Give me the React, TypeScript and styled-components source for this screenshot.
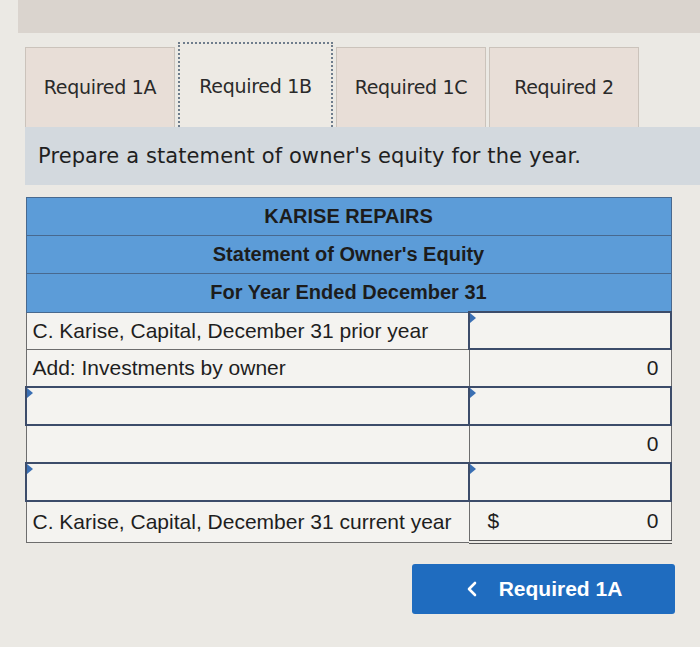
import React from 'react';
import styled, { createGlobalStyle } from 'styled-components';

const GlobalStyle = createGlobalStyle`
  html, body {
    margin: 0;
    padding: 0;
    background: #ebe9e4;
  }
  body {
    font-family: "Liberation Sans", Arial, sans-serif;
    color: #1e1e1e;
  }
`;

interface Row {
  label?: string;
  value?: string;
  prefix?: string;
  labelInput?: boolean;
  valueInput?: boolean;
  total?: boolean;
}

const rows: Row[] = [
  { label: 'C. Karise, Capital, December 31 prior year', valueInput: true },
  { label: 'Add: Investments by owner', value: '0' },
  { labelInput: true, valueInput: true },
  { value: '0' },
  { labelInput: true, valueInput: true },
  { label: 'C. Karise, Capital, December 31 current year', prefix: '$', value: '0', total: true },
];

const tabs = ['Required 1A', 'Required 1B', 'Required 1C', 'Required 2'];

const App: React.FC = () => {
  return (
    <>
      <GlobalStyle />
      <Page>
        <TopBand />
        <Content>
          <TabBar>
            {tabs.map((t, i) => (
              <Tab key={t} $active={i === 1} $wide={i === 1}>
                {t}
              </Tab>
            ))}
          </TabBar>
          <Instruction>Prepare a statement of owner's equity for the year.</Instruction>
          <Sheet>
            <colgroup>
              <col style={{ width: 443 }} />
              <col style={{ width: 202 }} />
            </colgroup>
            <tbody>
              <tr>
                <HeadCell colSpan={2}>KARISE REPAIRS</HeadCell>
              </tr>
              <tr>
                <HeadCell colSpan={2}>Statement of Owner's Equity</HeadCell>
              </tr>
              <tr>
                <HeadCell colSpan={2}>For Year Ended December 31</HeadCell>
              </tr>
              {rows.map((r, i) => (
                <tr key={i}>
                  <LabelCell $input={r.labelInput} $total={r.total}>
                    {r.labelInput && <Marker />}
                    {r.label}
                  </LabelCell>
                  <ValueCell $input={r.valueInput} $total={r.total}>
                    {r.valueInput && <Marker />}
                    <ValueInner>
                      <span>{r.prefix}</span>
                      <span>{r.value}</span>
                    </ValueInner>
                  </ValueCell>
                </tr>
              ))}
            </tbody>
          </Sheet>
          <Footer>
            <NavButton>
              <svg width="14" height="18" viewBox="0 0 14 18">
                <path d="M10 3 L4 9 L10 15" fill="none" stroke="#fff" strokeWidth="2.6" strokeLinecap="round" strokeLinejoin="round" />
              </svg>
              Required 1A
            </NavButton>
          </Footer>
        </Content>
      </Page>
    </>
  );
};

const Page = styled.div`
  width: 700px;
  min-height: 647px;
  overflow: hidden;
`;

const TopBand = styled.div`
  height: 33px;
  margin-left: 18px;
  background: #dad4ce;
`;

const Content = styled.div`
  padding-left: 25px;
`;

const TabBar = styled.div`
  display: flex;
  align-items: flex-end;
  gap: 3px;
  height: 94px;
`;

const Tab = styled.div<{ $active?: boolean; $wide?: boolean }>`
  box-sizing: border-box;
  width: ${p => (p.$wide ? 155 : 150)}px;
  height: ${p => (p.$active ? 85 : 80)}px;
  display: flex;
  align-items: center;
  justify-content: center;
  font-family: "DejaVu Sans", Verdana, sans-serif;
  font-size: 19px;
  letter-spacing: -0.3px;
  color: #2a2a2a;
  background: ${p => (p.$active ? '#edeae4' : '#e8ded7')};
  border: ${p => (p.$active ? '2px dotted #6f7d8c' : '1px solid #cbc3bb')};
  border-bottom: none;
  padding-bottom: ${p => (p.$active ? 0 : 2)}px;
  white-space: nowrap;
`;

const Instruction = styled.div`
  height: 58px;
  display: flex;
  align-items: center;
  padding-left: 13px;
  background: #d3d9de;
  font-family: "DejaVu Sans", Verdana, sans-serif;
  font-size: 21px;
  letter-spacing: 0.1px;
  color: #1f1f1f;
`;

const Sheet = styled.table`
  margin-top: 12px;
  width: 645px;
  border-collapse: collapse;
  table-layout: fixed;
  font-size: 21px;
`;

const HeadCell = styled.td`
  height: 37px;
  padding: 0;
  background: #5c9cd8;
  border: 1px solid #48698f;
  text-align: center;
  color: #1c1c1c;
  font-size: 20px;
  font-weight: bold;
`;

const Marker = styled.span`
  position: absolute;
  top: 0;
  left: 0;
  width: 0;
  height: 0;
  border-top: 5px solid transparent;
  border-bottom: 5px solid transparent;
  border-left: 6px solid #3a6fb3;
`;

const LabelCell = styled.td<{ $input?: boolean; $total?: boolean }>`
  position: relative;
  height: ${p => (p.$total ? 40 : 36)}px;
  padding: 0 6px;
  background: #f4f3f0;
  border: ${p => (p.$input ? '2px solid #3c4c6a' : '1px solid #6d6d6d')};
  white-space: nowrap;
  overflow: hidden;
`;

const ValueCell = styled.td<{ $input?: boolean; $total?: boolean }>`
  position: relative;
  padding: 0 12px 0 18px;
  background: #f4f3f0;
  border: ${p => (p.$input ? '2px solid #3c4c6a' : '1px solid #6d6d6d')};
  border-bottom: ${p => (p.$total ? '4px double #555' : undefined)};
`;

const ValueInner = styled.div`
  display: flex;
  justify-content: space-between;
`;

const Footer = styled.div`
  display: flex;
  justify-content: flex-end;
  padding-right: 25px;
  margin-top: 20px;
`;

const NavButton = styled.button`
  width: 263px;
  height: 50px;
  display: flex;
  align-items: center;
  justify-content: center;
  gap: 20px;
  background: #1f6cbf;
  border: none;
  border-radius: 3px;
  color: #fff;
  font-family: "Liberation Sans", Arial, sans-serif;
  font-weight: bold;
  font-size: 21px;
  padding: 0;
`;

export default App;
